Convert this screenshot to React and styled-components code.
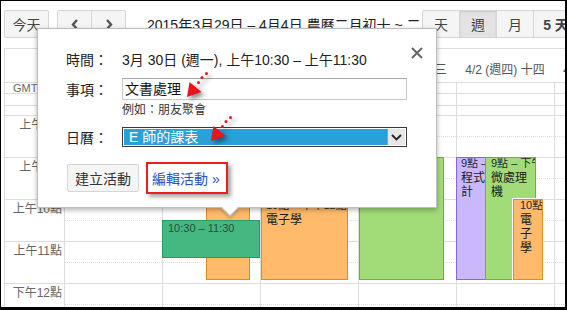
import React from 'react'
import styled, { createGlobalStyle } from 'styled-components'

const GlobalStyle = createGlobalStyle`
  html, body { margin: 0; padding: 0; background: #fff; }
  body { font-family: "Liberation Sans", Arial, "Noto Sans CJK TC", sans-serif; }
  * { box-sizing: border-box; }
`

const Frame = styled.div`
  position: relative;
  width: 567px;
  height: 310px;
  border: 1px solid #000;
  border-right-width: 2px;
  border-bottom-width: 3px;
  overflow: hidden;
  background: #fff;
  color: #222;
`

// ---- toolbar
const Toolbar = styled.div`
  display: flex;
  align-items: center;
  height: 28px;
  margin: 9px 0 0 3px;
  width: 600px;
`

const Btn = styled.div`
  flex-shrink: 0;
  height: 28px;
  width: ${p => p.$w}px;
  display: flex;
  align-items: center;
  justify-content: center;
  background: ${p => (p.$active ? '#e3e3e3' : '#f5f5f5')};
  box-shadow: ${p => (p.$active ? 'inset 0 1px 2px rgba(0,0,0,.12)' : 'none')};
  border: 1px solid #d6d6d6;
  border-radius: 2px;
  color: #444;
  font-size: 14px;
  font-weight: ${p => (p.$bold ? 700 : 400)};
  & + & { margin-left: -1px; }
`

const BtnGroup = styled.div`
  display: flex;
  flex-shrink: 0;
  margin-left: ${p => p.$ml || 0}px;
  & > div { border-radius: 0; }
  & > div:first-child { border-radius: 2px 0 0 2px; }
  & > div:last-child { border-radius: 0 2px 2px 0; }
`

const Title = styled.div`
  width: 275px;
  flex-shrink: 0;
  margin-left: 21px;
  font-size: 14px;
  color: #222;
  white-space: nowrap;
  overflow: hidden;
`

// ---- calendar
const Calendar = styled.div`
  margin: 10px 0 0 3px;
  border-left: 1px solid #ddd;
  border-top: 1px solid #ddd;
`

const Row = styled.div`
  display: grid;
  grid-template-columns: 59px repeat(6, 98px);
  height: ${p => p.$h}px;
  border-bottom: ${p => (p.$line ? '1px solid #ddd' : 'none')};
`

const DayHead = styled.div`
  padding-top: 14px;
  text-align: center;
  font-size: 12px;
  line-height: 14px;
  color: #555;
  white-space: nowrap;
`

const AllDayCell = styled.div`
  border-left: ${p => (p.$axis ? 'none' : '1px solid #ddd')};
  font-size: 11px;
  color: #666;
  padding-left: 8px;
  line-height: 10px;
  white-space: nowrap;
  overflow: hidden;
`

const Body = styled.div`
  display: grid;
  grid-template-columns: 59px repeat(6, 98px);
  height: 210px;
  overflow: hidden;
`

const Axis = styled.div`
  padding-top: 9px;
`

const HourLabel = styled.div`
  height: 42px;
  border-top: 1px solid #ddd;
  padding: 2px 2px 0 0;
  text-align: right;
  font-size: 12px;
  line-height: 14px;
  color: #666;
  white-space: nowrap;
`

const DayCol = styled.div`
  position: relative;
  border-left: 1px solid #ddd;
  padding-top: 9px;
`

const Slot = styled.div`
  height: 42px;
  border-top: 1px solid #ddd;
  position: relative;
  &::after {
    content: '';
    position: absolute;
    left: 0;
    right: 0;
    top: 20px;
    border-top: 1px dotted #ddd;
  }
`

const Event = styled.div`
  position: absolute;
  top: ${p => p.$top}px;
  left: ${p => p.$left}px;
  width: ${p => p.$w}px;
  height: ${p => p.$h}px;
  background: ${p => p.$bg};
  border: 1px solid ${p => p.$bd};
  box-shadow: ${p => (p.$ring ? '0 0 0 1px #fff' : 'none')};
  padding: 0 0 0 ${p => p.$pl || 4}px;
  overflow: hidden;
  color: #1b1b1b;
  z-index: ${p => p.$z || 1};
`

const EventTime = styled.div`
  font-size: 11px;
  line-height: 11px;
  padding-top: ${p => (p.$pad ? 2 : 0)}px;
  white-space: nowrap;
  overflow: hidden;
  color: ${p => p.$c || '#2a2a2a'};
`

const EventTitle = styled.div`
  margin-top: 2px;
  font-size: 12px;
  line-height: 14px;
  word-break: break-all;
`

// ---- popup
const Popup = styled.div`
  position: absolute;
  left: 36px;
  top: 27px;
  width: 400px;
  height: 180px;
  background: #fff;
  border: 1px solid #bdbdbd;
  box-shadow: 0 2px 5px rgba(0, 0, 0, 0.3);
  padding: 20px 14px 0 28px;
  z-index: 10;
`

const Tail = styled.div`
  position: absolute;
  left: 186px;
  bottom: -7px;
  width: 12px;
  height: 12px;
  background: #fff;
  border-right: 1px solid #bdbdbd;
  border-bottom: 1px solid #bdbdbd;
  transform: rotate(45deg);
  box-shadow: 2px 2px 3px rgba(0, 0, 0, 0.2);
`

const Close = styled.div`
  position: absolute;
  left: 372px;
  top: 18px;
  width: 14px;
  height: 12px;
  display: flex;
`

const FieldRow = styled.div`
  display: flex;
  align-items: center;
  height: ${p => p.$h}px;
  margin-top: ${p => p.$mt || 0}px;
`

const Label = styled.div`
  width: 56px;
  flex-shrink: 0;
  font-size: 14px;
  color: #222;
`

const Value = styled.div`
  font-size: 14px;
  color: #222;
  white-space: nowrap;
`

const Input = styled.div`
  width: 285px;
  height: 22px;
  border: 1px solid #c8c8c8;
  border-top-color: #a8a8a8;
  padding-left: 2px;
  font-size: 14px;
  line-height: 20px;
  color: #111;
`

const Hint = styled.div`
  margin: 2px 0 0 56px;
  height: 16px;
  font-size: 12px;
  line-height: 16px;
  color: #333;
`

const Select = styled.div`
  width: 285px;
  height: 20px;
  border: 1px solid #3a3a3a;
  padding: 1px;
  display: flex;
  background: #fff;
`

const SelectValue = styled.div`
  flex: 1;
  background: #29a0d8;
  color: #fff;
  font-size: 14px;
  line-height: 16px;
  padding-left: 5px;
`

const SelectArrow = styled.div`
  width: 18px;
  background: #e6e6e6;
  border-left: 1px solid #9a9a9a;
  display: flex;
  align-items: center;
  justify-content: center;
`

const Actions = styled.div`
  display: flex;
  align-items: center;
  height: 32px;
  margin-top: 15px;
`

const CreateBtn = styled.div`
  width: 72px;
  height: 28px;
  margin-left: 1px;
  display: flex;
  align-items: center;
  justify-content: center;
  background: #f5f5f5;
  border: 1px solid #d6d6d6;
  border-radius: 2px;
  font-size: 14px;
  color: #333;
`

const Marked = styled.div`
  margin-left: 7px;
  height: 32px;
  padding: 0 6px 0 4px;
  display: flex;
  align-items: center;
  border: 2px solid #ee1c1c;
  box-shadow: 3px 3px 4px rgba(0, 0, 0, 0.35);
`

const EditLink = styled.span`
  font-size: 14px;
  color: #2450cc;
  white-space: nowrap;
`

const Pointer = styled.svg`
  position: absolute;
  left: ${p => p.$x}px;
  top: ${p => p.$y}px;
  filter: drop-shadow(3px 3px 2px rgba(0, 0, 0, 0.45));
  overflow: visible;
`

function Chevron({ dir }) {
  const d = dir === 'left' ? 'M6 1 L2 5.5 L6 10' : 'M2 1 L6 5.5 L2 10'
  return (
    <svg width="8" height="11" viewBox="0 0 8 11">
      <path d={d} fill="none" stroke="#555" strokeWidth="2.4" />
    </svg>
  )
}

function RedArrow({ x, y }) {
  return (
    <Pointer $x={x} $y={y} width="22" height="27" viewBox="0 0 22 27">
      <polygon points="1,26 3.5,11 15.5,21" fill="#e8141b" />
      <circle cx="12.5" cy="11.5" r="1.5" fill="#e8141b" />
      <circle cx="16" cy="6.5" r="1.5" fill="#e8141b" />
      <circle cx="20.5" cy="2.5" r="1.5" fill="#e8141b" />
    </Pointer>
  )
}

const days = [
  '3/29 (週日) 初十',
  '3/30 (週一) 十一',
  '3/31 (週二) 十二',
  '4/1 (週三) 十三',
  '4/2 (週四) 十四',
  '4/3 (週五) 十五',
]

const hours = ['上午8點', '上午9點', '上午10點', '上午11點', '下午12點']

const colors = {
  orange: ['#ffbb6b', '#e38c1d'],
  green: ['#a1dc79', '#63b92e'],
  purple: ['#c9b9fb', '#8b62df'],
  pick: ['#45b781', '#2c9b61'],
}

// events per day column; start/end in hours
const events = {
  1: [
    { start: 9, end: 12, left: 43, w: 44, c: 'orange' },
    { start: 10.5, end: 11.5, left: -1, w: 98, c: 'pick', time: '10:30 – 11:30', z: 2, cut: 4, pl: 5, pad: true },
  ],
  2: [{ start: 10, end: 12, left: 0, w: 87, c: 'orange', time: '10點 – 下午12點', title: '電子學' }],
  3: [{ start: 9, end: 12, left: 0, w: 85, c: 'green' }],
  4: [
    { start: 9, end: 12, left: -1, w: 30, c: 'purple', time: '9點 – 下午12點', title: '程式計', pl: 4 },
    { start: 9, end: 12, left: 28, w: 51, c: 'green', time: '9點 – 下午4點', title: '微處理機', pl: 5, z: 2 },
    { start: 10, end: 12, left: 56, w: 30, c: 'orange', time: '10點', title: '電子學', ring: true, z: 3, pl: 6 },
  ],
}

const topOf = h => 9 + (h - 8) * 42

export default function App() {
  return (
    <Frame>
      <GlobalStyle />
      <Toolbar>
        <Btn $w={45}>今天</Btn>
        <BtnGroup $ml={8}>
          <Btn $w={35}><Chevron dir="left" /></Btn>
          <Btn $w={35}><Chevron dir="right" /></Btn>
        </BtnGroup>
        <Title>2015年3月29日 – 4月4日 農曆二月初十 ~ 二月十六</Title>
        <BtnGroup>
          <Btn $w={38}>天</Btn>
          <Btn $w={38} $active>週</Btn>
          <Btn $w={38}>月</Btn>
          <Btn $w={46} $bold>5 天</Btn>
        </BtnGroup>
      </Toolbar>

      <Calendar>
        <Row $h={34} $line>
          <div />
          {days.map(d => <DayHead key={d}>{d}</DayHead>)}
        </Row>
        <Row $h={11} $line>
          <AllDayCell $axis>GMT+08</AllDayCell>
          {days.map(d => <AllDayCell key={d} />)}
        </Row>
        <Row $h={12} $line>
          <div />
          {days.map(d => <AllDayCell key={d} />)}
        </Row>
        <Body>
          <Axis>
            {hours.map(h => <HourLabel key={h}>{h}</HourLabel>)}
          </Axis>
          {days.map((d, i) => (
            <DayCol key={d}>
              {hours.map(h => <Slot key={h} />)}
              {(events[i] || []).map((e, j) => (
                <Event
                  key={j}
                  $top={topOf(e.start)}
                  $h={(e.end - e.start) * 42 - (e.cut || 3)}
                  $left={e.left}
                  $w={e.w}
                  $bg={colors[e.c][0]}
                  $bd={colors[e.c][1]}
                  $ring={e.ring}
                  $z={e.z}
                  $pl={e.pl}
                >
                  {e.time && (
                    <EventTime $pad={e.pad} $c={e.c === 'pick' ? '#27503a' : null}>
                      {e.time}
                    </EventTime>
                  )}
                  {e.title && <EventTitle>{e.title}</EventTitle>}
                </Event>
              ))}
            </DayCol>
          ))}
        </Body>
      </Calendar>

      <Popup>
        <Close>
          <svg width="14" height="12" viewBox="0 0 14 12">
            <path d="M2 1 L12 11 M12 1 L2 11" stroke="#666" strokeWidth="2" />
          </svg>
        </Close>
        <FieldRow $h={20}>
          <Label>時間：</Label>
          <Value>3月 30日 (週一), 上午10:30 – 上午11:30</Value>
        </FieldRow>
        <FieldRow $h={22} $mt={9}>
          <Label>事項：</Label>
          <Input>文書處理</Input>
        </FieldRow>
        <Hint>例如：朋友聚會</Hint>
        <FieldRow $h={20} $mt={9}>
          <Label>日曆：</Label>
          <Select>
            <SelectValue>E 師的課表</SelectValue>
            <SelectArrow>
              <svg width="11" height="7" viewBox="0 0 11 7">
                <path d="M1 1 L5.5 5.5 L10 1" fill="none" stroke="#222" strokeWidth="1.8" />
              </svg>
            </SelectArrow>
          </Select>
        </FieldRow>
        <Actions>
          <CreateBtn>建立活動</CreateBtn>
          <Marked>
            <EditLink>編輯活動 »</EditLink>
          </Marked>
        </Actions>
        <Tail />
        <RedArrow x={148} y={42} />
        <RedArrow x={172} y={86} />
      </Popup>
    </Frame>
  )
}
